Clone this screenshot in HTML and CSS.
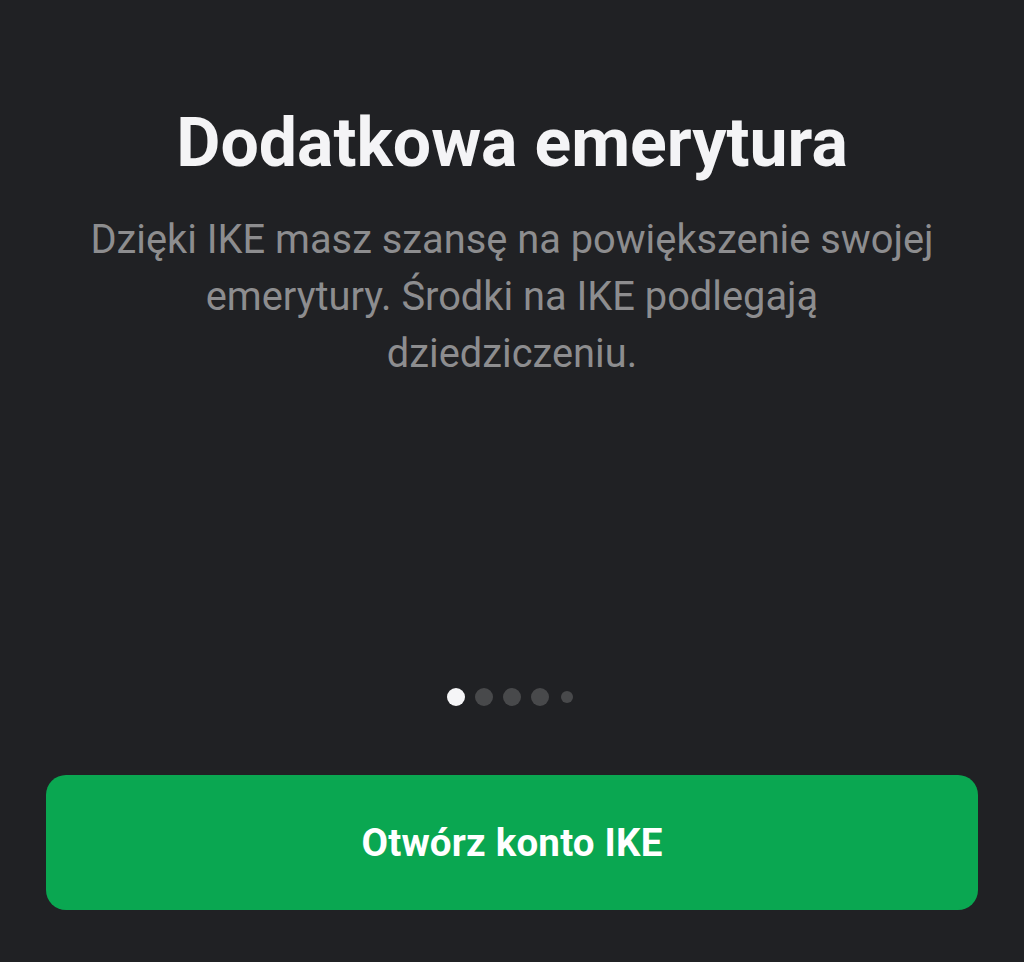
FILE: index.html
```html
<!DOCTYPE html>
<html lang="pl">
<head>
<meta charset="UTF-8" />
<meta name="viewport" content="width=device-width, initial-scale=1" />
<title>IKE - Dodatkowa emerytura</title>
<link rel="stylesheet" href="styles.css">
</head>
<body>

<div class="screen">

  <!-- Slajd -->
  <div class="slide">
    <h1 class="slide-title">Dodatkowa emerytura</h1>
    <p class="slide-text">Dzięki IKE masz szansę na powiększenie swojej emerytury. Środki na IKE podlegają dziedziczeniu.</p>
  </div>

  <!-- Kropki -->
  <div class="dots">
    <span class="dot active"></span>
    <span class="dot"></span>
    <span class="dot"></span>
    <span class="dot"></span>
    <span class="dot small"></span>
  </div>

  <button class="cta" type="button">Otwórz konto IKE</button>

</div>

</body>
</html>
```

FILE: styles.css
```css
html, body { margin: 0; padding: 0; background: #202124; }
body { font-family: Roboto, "Noto Sans", Arial, sans-serif; }

.screen {
  height: 962px; box-sizing: border-box; display: flex; flex-direction: column;
  padding: 103px 46px 52px;
}

.slide { text-align: center; }
.slide-title {
  margin: 0; font-size: 68px; line-height: 80px; font-weight: 700; color: #f4f4f6;
}
.slide-text {
  margin: 28px 34px 0; font-size: 39.8px; line-height: 57px; color: #8d8d8f;
}

.dots {
  margin-top: auto; display: flex; justify-content: center; align-items: center; gap: 10px;
  margin-right: 4px;
}
.dot { width: 18px; height: 18px; border-radius: 50%; background: #48494b; }
.dot.active { background: #f5f5f7; }
.dot.small { width: 12px; height: 12px; margin-left: 2px; }

.cta {
  margin-top: 69px; height: 135px; width: 100%; border: none; border-radius: 20px;
  background: #0aa751; color: #fff; font-family: inherit; font-size: 38.5px; font-weight: 700;
  letter-spacing: 0.2px; cursor: pointer;
}
```
